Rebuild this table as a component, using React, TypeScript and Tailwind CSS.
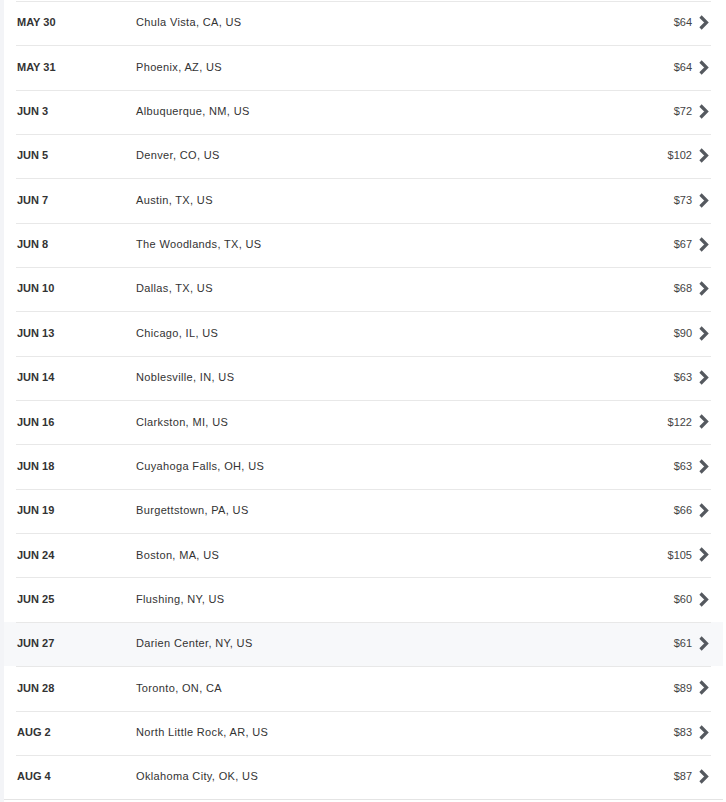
import React from "react";

const shows = [
  { date: "MAY 30", city: "Chula Vista, CA, US", price: "$64" },
  { date: "MAY 31", city: "Phoenix, AZ, US", price: "$64" },
  { date: "JUN 3", city: "Albuquerque, NM, US", price: "$72" },
  { date: "JUN 5", city: "Denver, CO, US", price: "$102" },
  { date: "JUN 7", city: "Austin, TX, US", price: "$73" },
  { date: "JUN 8", city: "The Woodlands, TX, US", price: "$67" },
  { date: "JUN 10", city: "Dallas, TX, US", price: "$68" },
  { date: "JUN 13", city: "Chicago, IL, US", price: "$90" },
  { date: "JUN 14", city: "Noblesville, IN, US", price: "$63" },
  { date: "JUN 16", city: "Clarkston, MI, US", price: "$122" },
  { date: "JUN 18", city: "Cuyahoga Falls, OH, US", price: "$63" },
  { date: "JUN 19", city: "Burgettstown, PA, US", price: "$66" },
  { date: "JUN 24", city: "Boston, MA, US", price: "$105" },
  { date: "JUN 25", city: "Flushing, NY, US", price: "$60" },
  { date: "JUN 27", city: "Darien Center, NY, US", price: "$61", active: true },
  { date: "JUN 28", city: "Toronto, ON, CA", price: "$89" },
  { date: "AUG 2", city: "North Little Rock, AR, US", price: "$83" },
  { date: "AUG 4", city: "Oklahoma City, OK, US", price: "$87" },
];

const Chevron = () => (
  <svg width="12" height="15" viewBox="0 0 12 15" className="ml-[6px] mr-px shrink-0">
    <path d="M2.5 1.5 L8.5 7.5 L2.5 13.5" fill="none" stroke="#55595f" strokeWidth="3.2" />
  </svg>
);

export default function App() {
  return (
    <div className="min-h-[802px] bg-white border-l-4 border-[#f3f4f7] pr-[3px] font-['Liberation_Sans',Arial,sans-serif]">
      <div className="bg-white pt-px border-b border-[#e4e4e4]">
        {shows.map((s) => (
          <div key={s.date} className={`px-3 ${s.active ? "bg-[#f7f8fa]" : "bg-white"}`}>
            <div className="flex h-[44.35px] items-center pb-[2px] border-t border-[#e8e8e8] text-[11px]">
              <div className="w-[120px] pl-px font-bold text-[#333]">{s.date}</div>
              <div className="flex-1 tracking-[0.35px] text-[#333]">{s.city}</div>
              <div className="text-[#444]">{s.price}</div>
              <Chevron />
            </div>
          </div>
        ))}
      </div>
    </div>
  );
}
